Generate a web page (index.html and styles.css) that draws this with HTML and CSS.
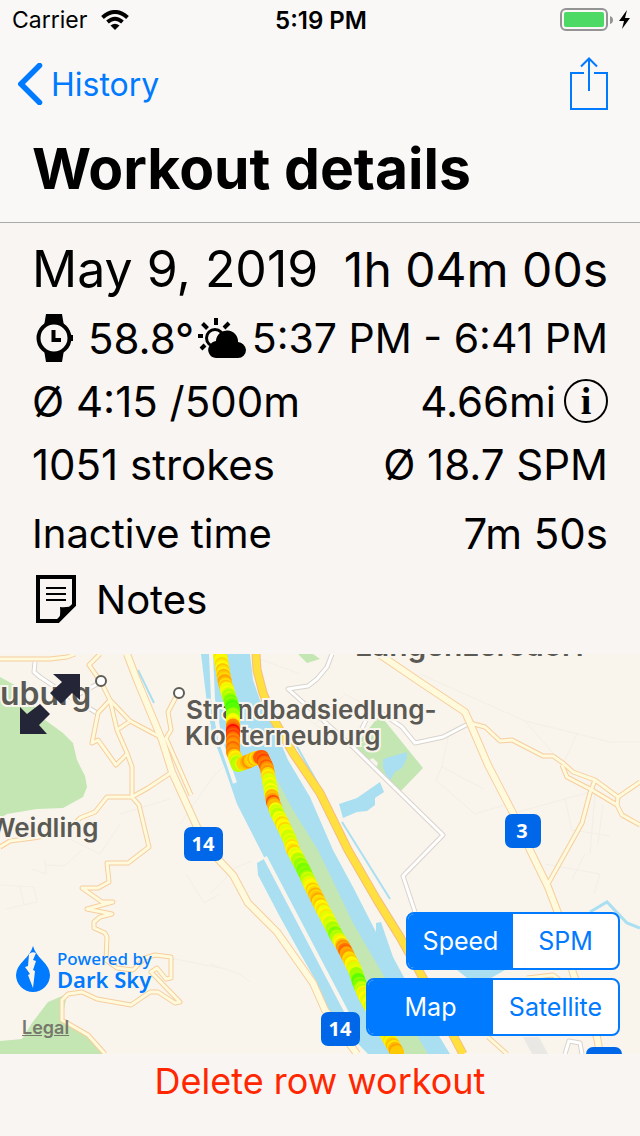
FILE: index.html
```
<!DOCTYPE html>
<html lang="en">
<head>
    <meta charset="UTF-8">
    <meta name="viewport" content="width=device-width, initial-scale=1.0">
    <title>Workout details</title>
    <link rel="stylesheet" href="styles.css">
</head>
<body>
<header>
    <div class="status-bar">
        <div class="carrier">
            <span>Carrier</span>
            <svg width="28" height="20" viewBox="0 0 28 20">
                <g fill="none" stroke="#000" stroke-width="4">
                    <path d="M1.5 7.5Q14 -3.500 26.500 7.500"/>
                    <path d="M6.500 12Q14 5.500 21.500 12"/>
                </g>
                <path d="M9.500 15.500Q14 12 18.500 15.500L14 20z"/>
            </svg>
        </div>
        <div class="time">5:19 PM</div>
        <div class="battery">
            <svg width="70" height="24" viewBox="0 0 70 24">
                <rect x="1" y="1" width="46" height="21" rx="5" fill="none" stroke="#949494" stroke-width="2"/>
                <rect x="4" y="4" width="40" height="15" rx="2" fill="#4cd964"/>
                <path d="M50 8q3 1 3 4t-3 4z" fill="#949494"/>
                <path d="M67 2l-8 11h5l-2 8 8-11h-5z"/>
            </svg>
        </div>
    </div>
    <nav>
        <a href="#history" class="back">
            <svg width="25" height="42" viewBox="0 0 25 42">
                <path d="M21.500 2.500L3 21l18.500 18.500" fill="none" stroke="#007aff" stroke-width="5.500" stroke-linecap="round" stroke-linejoin="miter"/>
            </svg>
            <span>History</span>
        </a>
        <button class="icon-btn" aria-label="Share">
            <svg width="38" height="54" viewBox="0 0 38 54">
                <path d="M14 16H1v36h36V16H24M19 34V2M11 9.500L19 1.500l8 8" fill="none" stroke="#007aff" stroke-width="2"/>
            </svg>
        </button>
    </nav>
    <h1>Workout details</h1>
</header>

<main>
    <section class="details">
        <div class="row tall">
            <span class="date">May 9, 2019</span>
            <span class="duration">1h 04m 00s</span>
        </div>
        <div class="row">
            <div class="weather">
                <svg class="watch" width="38" height="48" viewBox="0 0 38 48">
                    <path d="M10 0h16l2 12H8zM8 36h20l-2 12H10z"/>
                    <circle cx="18" cy="24" r="15.500" fill="#f9f5f2" stroke="#000" stroke-width="4"/>
                    <path d="M34 21h3v6h-3z"/>
                    <path d="M17.500 16v10H25" fill="none" stroke="#000" stroke-width="4"/>
                </svg>
                <span>58.8°</span>
                <svg class="cloudy" width="48" height="40" viewBox="0 0 48 40">
                    <path d="M18 0v7M4.500 5.500l5 5M31 5l-5 5M0 18h5M3 31l4-4" fill="none" stroke="#000" stroke-width="4"/>
                    <circle cx="17" cy="20" r="8.500" fill="none" stroke="#000" stroke-width="3"/>
                    <path d="M18 40a8 8 0 0 1-6-13 8 8 0 0 1 6-4 11 11 0 0 1 22 1 9 9 0 0 1 8 8 8 8 0 0 1-8 8z"/>
                </svg>
            </div>
            <span class="period">5:37 PM - 6:41 PM</span>
        </div>
        <div class="row short">
            <span>Ø 4:15 /500m</span>
            <div class="distance">
                <span>4.66mi</span>
                <button class="info" aria-label="Distance info">i</button>
            </div>
        </div>
        <div class="row">
            <span>1051 strokes</span>
            <span>Ø 18.7 SPM</span>
        </div>
        <div class="row tall">
            <span class="caption">Inactive time</span>
            <span>7m 50s</span>
        </div>
        <div class="row short">
            <a href="#notes" class="notes">
                <svg width="40" height="48" viewBox="0 0 40 48">
                    <path d="M2 2h36v28L22 46H2z" fill="none" stroke="#000" stroke-width="4"/>
                    <path d="M10 13h20M10 19h20M10 25h20" stroke="#000" stroke-width="2"/>
                    <path d="M24 32q7 1 15-2L22 47q3-6 2-15z"/>
                </svg>
                <span class="caption">Notes</span>
            </a>
        </div>
    </section>

    <section class="map">
        <svg class="tiles" viewBox="0 0 640 400" preserveAspectRatio="xMidYMid slice">
            <defs>
                <g id="streets">
                    <path d="M332 0L327 13 317 25 308 32 288 35 353 93 443 181 403 222 415 258"/>
                    <path d="M470 69L443 83 415 89 402 73 380 58M370 58L353 93"/>
                    <path d="M565 400L569 387 580 389 582 400"/>
                    <path d="M35 8L34 18 40 23 70 43 97 59M101 28L70 45"/>
                </g>
                <g id="roads">
                    <path d="M0 5H50L67 3 75 0"/>
                    <path d="M100 0L89 11 101 28 110 46 130 67 162 84"/>
                    <path d="M110 46L117 76 127 99 132 113 132 143 139 151 149 193 128 209 107 209 109 228 98 234 82 234 102 248 113 248 87 255 112 260 100 263 94 268 94 274 105 279 107 283 106 306 117 314 133 316 145 304 155 301 171 303 171 324 166 325 157 314 151 318 180 348 175 349 158 338 150 338 131 351 97 345 82 338 68 340 62 346 62 366 88 381 105 400"/>
                    <path d="M110 46L98 59 92 89 98 86 116 111 127 100M117 76L129 68"/>
                    <path d="M172 118L148 134 132 143 107 143 95 158 80 164 67 178 33 184 10 187 0 193"/>
                    <path d="M178 39L168 58 171 76 165 86M166 84L191 141"/>
                    <path d="M470 69L485 73 500 87 512 86 543 102 553 102 563 109 573 118 595 126 618 143 640 128"/>
                    <path d="M562 111L567 123 592 136 617 151 622 161 640 171M618 143L617 151"/>
                    <path d="M595 126L590 139 582 169 567 196 548 230"/>
                    <path d="M488 383L507 400M527 324L553 321 565 330"/>
                </g>
                <g id="mains">
                    <path d="M127 0L137 26 162 86 172 118 197 173 217 204 233 221 248 249 277 278 313 329 325 356 357 400"/>
                    <path d="M373 -4L420 28 465 58 470 69 488 111 515 163 530 196 548 233 558 259 573 319 597 383 600 400"/>
                </g>
                <path id="highway" d="M256 0L257 16 263 39 273 64 293 99 320 139 348 196 377 246 400 283 423 324 454 383 463 400"/>
            </defs>

            <rect width="640" height="400" fill="#f9f5ed"/>

            <!-- parks and forest -->
            <g fill="#c3e6b3">
                <path d="M0 23L20 34 45 66 63 79 73 89 77 106 85 122 87 133 83 143 63 154 37 155 7 160 0 164z"/>
                <path d="M0 387L22 385 32 369 48 348 67 340 62 366 88 381 104 400H0z"/>
                <path d="M298 0h15l7 5-13 4z"/>
                <path d="M380 61L423 114 400 138 376 114 378 109 373 104 367 107 353 94z"/>
            </g>
            <path d="M523 383h16l9 17h-16z" fill="#e9e8e4"/>

            <!-- minor paths -->
            <g fill="none" stroke="#f3eee6" stroke-width="1">
                <path d="M420 20L525 67 610 88H640M525 67L560 107M578 78L563 110M448 83L442 113 436 126 475 160 508 150M442 113L484 135"/>
                <path d="M518 158L590 138M565 145L572 176 610 182M595 140L590 200M603 150L598 190"/>
                <path d="M0 231L34 233 37 248 6 255M20 233L24 250M32 215L46 220 45 205M45 211L64 212 82 196"/>
                <path d="M186 220L204 249 220 240M160 302L220 314M120 160L170 145M180 170L215 120 240 100"/>
                <path d="M210 240L235 214 252 207M210 310L240 320 250 328M545 210L600 220 594 240M572 225L585 200"/>
                <path d="M300 60L350 94 370 85M315 70L345 40 375 57M260 5L300 20M120 170L100 200 60 180"/>
            </g>

            <!-- river -->
            <g fill="#aadff2">
                <path d="M201 0H250L253 26 260 46 272 68 288 106 310 143 333 196 353 233 376 278 376 269 381 268 393 303 407 329 450 400H370L346 359 264 203 237 150 225 115 212 80 207 50z"/>
                <path d="M257 209L264 205 372 400H368L325 356 317 329 300 299 280 263 258 221z"/>
                <path d="M383 105L407 98 407 104 402 114 395 118 390 126 386 121 383 113z"/>
                <path d="M339 150L357 144 380 128 384 138 375 144 375 151 367 157 357 158 343 164z"/>
                <path d="M457 316h48l-14 8h-24z"/>
            </g>
            <path d="M211 0L213 45 220 85 235 129M265 203L347 359" fill="none" stroke="#f9f5ed" stroke-width="4"/>
            <path d="M272 116L293 156 318 196 353 269 385 324 418 383 428 400H400L362 336 305 219 277 159z" fill="#c3e6b3"/>
            <path d="M290 80L318 130M342 168L390 245M138 16L154 49" fill="none" stroke="#aadff2" stroke-width="2"/>
            <path d="M590 258L607 248 627 269 640 274" fill="none" stroke="#aadff2" stroke-width="3"/>

            <use href="#streets" class="line street-case"/>
            <use href="#streets" class="line street"/>
            <use href="#mains" class="line main-case"/>
            <use href="#roads" class="line road-case"/>
            <use href="#mains" class="line main"/>
            <use href="#roads" class="line road"/>
            <use href="#highway" class="line highway-case"/>
            <use href="#highway" class="line highway"/>

            <!-- places -->
            <g fill="#fff" stroke="#5f5d58" stroke-width="2">
                <circle cx="101" cy="27" r="5"/>
                <circle cx="179" cy="39" r="5"/>
            </g>
            <g class="place">
                <text x="0" y="51" class="town">uburg</text>
                <text x="355" y="2" class="village">Langenzersdorf</text>
                <text x="186" y="65">Strandbadsiedlung-</text>
                <text x="185" y="91">Klosterneuburg</text>
                <text x="-11" y="183">Weidling</text>
            </g>

            <g id="route"></g>

            <g class="shield">
                <rect x="184" y="173" width="39" height="34" rx="7"/>
                <text x="203" y="197">14</text>
                <rect x="505" y="160" width="36" height="34" rx="7"/>
                <text x="522" y="184">3</text>
                <rect x="321" y="358" width="39" height="34" rx="7"/>
                <text x="340" y="382">14</text>
                <rect x="586" y="393" width="36" height="34" rx="7"/>
            </g>
        </svg>

        <button class="icon-btn expand" aria-label="Expand map">
            <svg width="60" height="60" viewBox="0 0 60 60" fill="#242536">
                <path d="M33 0H60V26L52 19 41 30 30 19 42 8z"/>
                <path d="M0 33L7 40 20 30 30 40 19 51 27 60H0z"/>
            </svg>
        </button>

        <a href="#darksky" class="darksky">
            <svg width="34" height="46" viewBox="0 0 34 46">
                <path d="M17 0Q19 7 26 14 34 22 34 29A17 17 0 0 1 0 29Q0 22 8 14 15 7 17 0z" fill="#007aff"/>
                <path d="M13 8Q16 5 20 7L17 14 20 15 17 24 19 25 17 42 12 29 14 28 9 21 12 20z" fill="#f9f5ed"/>
            </svg>
            <span class="credit">Powered by <strong>Dark Sky</strong></span>
        </a>
        <a href="#legal" class="legal">Legal</a>

        <div class="controls">
            <div class="segmented" role="radiogroup" aria-label="Route colour">
                <input type="radio" name="metric" id="speed" checked>
                <label for="speed">Speed</label>
                <input type="radio" name="metric" id="spm">
                <label for="spm">SPM</label>
            </div>
            <div class="segmented wide" role="radiogroup" aria-label="Map type">
                <input type="radio" name="layer" id="map" checked>
                <label for="map">Map</label>
                <input type="radio" name="layer" id="satellite">
                <label for="satellite">Satellite</label>
            </div>
        </div>
    </section>
</main>

<footer>
    <button class="delete">Delete row workout</button>
</footer>

<script src="route.js"></script>
</body>
</html>
```
FILE: styles.css
```
:root {
    --bg-color: #f9f5f2;
    --header-bg-color: #f9f8f7;
    --line-color: #acaaa9;
    --tint-color: #007aff;
    --danger-color: #ff2600;
    --shield-color: #0068e8;
    --land-color: #f9f5ed;
}

*, *::before, *::after {
    box-sizing: border-box;
}

body {
    font-family: Inter, "Liberation Sans", sans-serif;
    margin: 0;
    min-height: 100vh;
    display: flex;
    flex-direction: column;
    background-color: var(--bg-color);
    color: #000;
}

svg {
    display: block;
    flex-shrink: 0;
}

a {
    color: inherit;
    text-decoration: none;
}

button {
    font-family: inherit;
    background: none;
    border: 0;
    padding: 0;
    cursor: pointer;
}

header {
    background-color: var(--header-bg-color);
    border-bottom: 1px solid var(--line-color);
}

.status-bar {
    display: grid;
    grid-template-columns: 1fr auto 1fr;
    align-items: center;
    height: 40px;
    padding: 0 10px 0 12px;
    font-size: 23px;
}

.carrier {
    display: flex;
    align-items: center;
    gap: 14px;
}

.time {
    font-size: 24px;
    font-weight: 600;
}

.battery {
    justify-self: end;
}

nav {
    display: flex;
    align-items: center;
    justify-content: space-between;
    height: 88px;
    padding: 0 32px 0 18px;
}

.back {
    display: flex;
    align-items: center;
    gap: 8px;
    color: var(--tint-color);
    font-size: 32px;
}

h1 {
    margin: 0;
    padding: 2px 32px 14px;
    font-size: 57px;
    line-height: 78px;
    font-weight: 700;
}

main {
    flex: 1;
    display: flex;
    flex-direction: column;
}

.details {
    padding: 10px 32px 25px;
    font-size: 42px;
    white-space: nowrap;
}

.row {
    display: flex;
    align-items: center;
    justify-content: space-between;
    height: 66px;
}

.row.tall {
    height: 72px;
}

.row.short {
    height: 60px;
}

.date {
    font-size: 50px;
}

.duration {
    font-size: 48px;
}

.period {
    font-size: 41px;
}

.caption {
    font-size: 40px;
}

.weather, .distance, .notes {
    display: flex;
    align-items: center;
}

.watch {
    margin: 0 14px 0 4px;
}

.cloudy {
    margin-left: 4px;
}

.distance {
    gap: 8px;
}

.info {
    width: 44px;
    height: 44px;
    border: 2px solid #000;
    border-radius: 50%;
    font: bold 38px/38px "Liberation Serif", serif;
    color: #000;
}

.notes {
    gap: 20px;
    padding-left: 4px;
}

.map {
    position: relative;
    flex: 1;
    min-height: 400px;
    overflow: hidden;
}

.tiles {
    position: absolute;
    width: 100%;
    height: 100%;
}

/* every road is drawn twice: a wide casing, then the fill on top */
.line {
    fill: none;
    stroke-linejoin: round;
}

.street-case {
    stroke: #d9d3cc;
    stroke-width: 5px;
}

.street {
    stroke: #fff;
    stroke-width: 3px;
}

.road-case {
    stroke: #f6ce9f;
    stroke-width: 5px;
}

.road {
    stroke: #fffadb;
    stroke-width: 3px;
}

.main-case {
    stroke: #f6ce9f;
    stroke-width: 8px;
}

.main {
    stroke: #fffadb;
    stroke-width: 6px;
}

.highway-case {
    stroke: #f5bd80;
    stroke-width: 9px;
}

.highway {
    stroke: #ffe03f;
    stroke-width: 7px;
}

#route circle {
    r: 7px;
}

.place {
    fill: #5b5953;
    stroke: var(--land-color);
    stroke-width: 4px;
    paint-order: stroke;
    font-size: 26px;
    font-weight: 600;
}

.town {
    font-size: 32px;
}

.village {
    font-size: 30px;
}

.shield {
    fill: var(--shield-color);
}

.shield text {
    fill: #fff;
    font: bold 20px "Noto Sans", sans-serif;
    text-anchor: middle;
}

.expand {
    position: absolute;
    left: 20px;
    top: 20px;
}

.darksky {
    position: absolute;
    left: 16px;
    bottom: 62px;
    display: flex;
    align-items: center;
    gap: 7px;
    color: var(--tint-color);
}

.credit {
    font: 500 17px/20px "Noto Sans", sans-serif;
}

.credit strong {
    display: block;
    font-size: 22px;
    line-height: 20px;
    font-weight: 600;
}

.legal {
    position: absolute;
    left: 22px;
    bottom: 16px;
    color: #77776c;
    font-size: 18px;
    font-weight: 600;
    text-decoration: underline;
}

.controls {
    position: absolute;
    right: 20px;
    bottom: 18px;
    display: flex;
    flex-direction: column;
    align-items: flex-end;
    gap: 8px;
}

.segmented {
    display: flex;
    width: 214px;
    height: 58px;
    border: 2px solid var(--tint-color);
    border-radius: 8px;
    overflow: hidden;
    background-color: #fff;
    font-size: 25px;
}

.segmented.wide {
    width: 254px;
}

.segmented input {
    position: absolute;
    opacity: 0;
}

.segmented label {
    flex: 1;
    display: flex;
    align-items: center;
    justify-content: center;
    color: var(--tint-color);
    cursor: pointer;
}

.segmented input:checked + label {
    background-color: var(--tint-color);
    color: #fff;
}

footer {
    padding-bottom: 28px;
    text-align: center;
}

.delete {
    height: 54px;
    color: var(--danger-color);
    font-size: 36px;
}
```
FILE: route.js
```
// x, y and hue of the recorded speed samples (0 = slow, 100 = fast)
const samples = [
    [220, 0, 62], [223, 18, 52], [225, 29, 42], [229, 42, 75], [233, 55, 105], [233, 66, 70],
    [233, 77, 8], [233, 88, 32], [233, 98, 30], [238, 111, 82], [247, 108, 38], [256, 104, 52],
    [262, 103, 18], [267, 114, 30], [269, 126, 64], [271, 138, 68], [273, 148, 24], [277, 159, 76],
    [283, 171, 54], [290, 186, 72], [293, 196, 52], [299, 207, 76], [305, 219, 92], [311, 232, 58],
    [317, 244, 44], [323, 256, 58], [330, 269, 66], [336, 281, 88], [341, 289, 56], [345, 296, 26],
    [350, 306, 50], [355, 316, 66], [359, 328, 98], [364, 340, 60], [376, 362, 70], [390, 386, 58], [398, 400, 38]
];

const route = document.getElementById('route');
let step = 0;

for (let i = 0; i < samples.length - 1; i++) {
    const [x1, y1, h1] = samples[i];
    const [x2, y2, h2] = samples[i + 1];
    const parts = Math.max(1, Math.round(Math.hypot(x2 - x1, y2 - y1) / 2));
    for (let p = 0; p < parts; p++) {
        const t = p / parts;
        const hue = h1 + (h2 - h1) * t + Math.sin(step * 2.1) * 7;
        const dot = document.createElementNS('http://www.w3.org/2000/svg', 'circle');
        dot.setAttribute('cx', x1 + (x2 - x1) * t);
        dot.setAttribute('cy', y1 + (y2 - y1) * t);
        dot.setAttribute('fill', `hsl(${Math.max(0, hue)}, 100%, 50%)`);
        route.appendChild(dot);
        step++;
    }
}
```
